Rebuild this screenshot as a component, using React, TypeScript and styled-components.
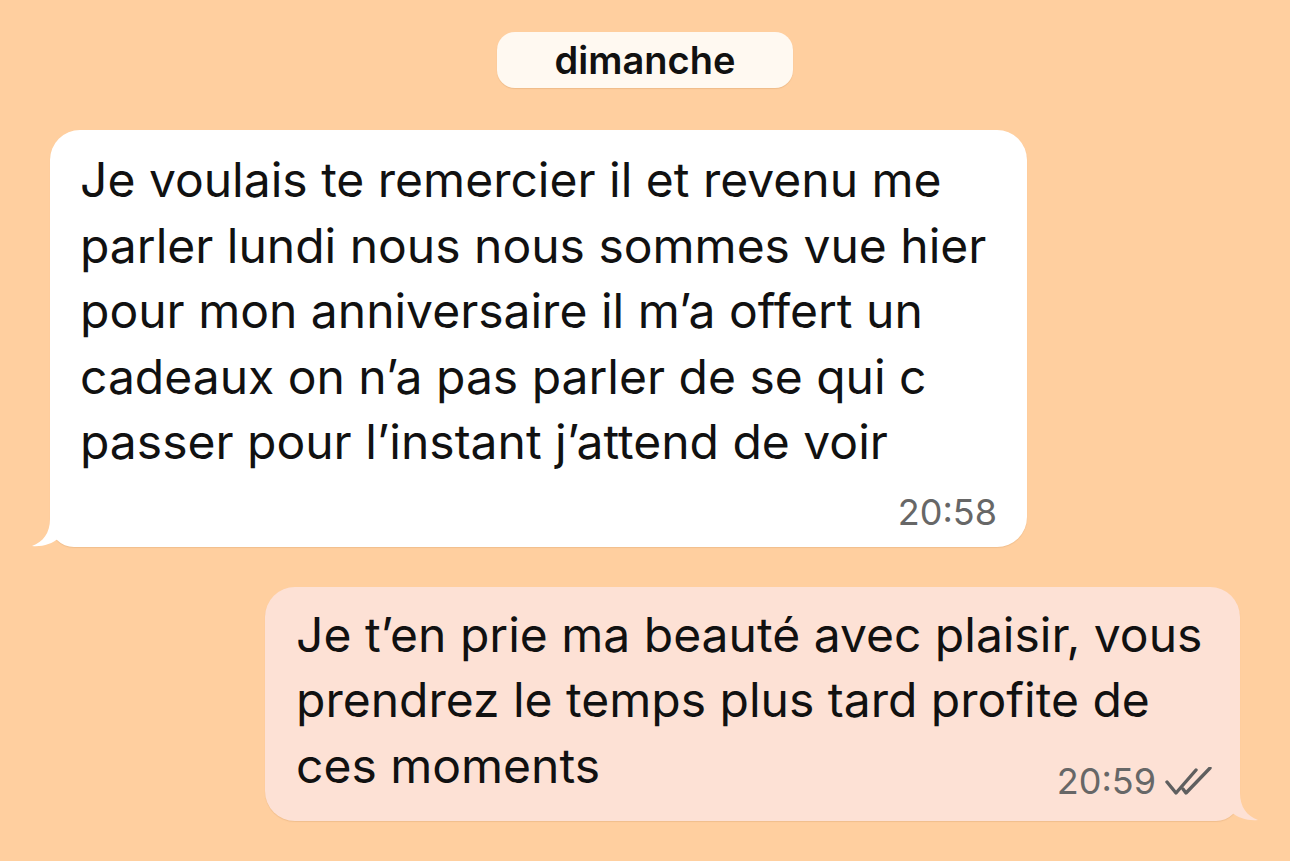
import styled, { createGlobalStyle } from 'styled-components';

const GlobalStyle = createGlobalStyle`
  html, body {
    margin: 0;
    padding: 0;
    background: #ffcf9f;
  }
  body {
    font-family: Inter, "Liberation Sans", sans-serif;
    -webkit-font-smoothing: antialiased;
  }
`;

interface Message {
  id: number;
  outgoing: boolean;
  lines: string[];
  time: string;
  inlineTime?: boolean;
}

const messages: Message[] = [
  {
    id: 1,
    outgoing: false,
    lines: [
      'Je voulais te remercier il et revenu me',
      'parler lundi nous nous sommes vue hier',
      'pour mon anniversaire il m’a offert un',
      'cadeaux on n’a pas parler de se qui c',
      'passer pour l’instant j’attend de voir',
    ],
    time: '20:58',
  },
  {
    id: 2,
    outgoing: true,
    lines: [
      'Je t’en prie ma beauté avec plaisir, vous',
      'prendrez le temps plus tard profite de',
      'ces moments',
    ],
    time: '20:59',
    inlineTime: true,
  },
];

const Tail = ({ color, flip }: { color: string; flip?: boolean }) => (
  <TailSvg $flip={flip} width="50" height="40" viewBox="0 0 50 40">
    <path
      d="M18 0 L18 12 C18 26 11 35 0 39 C10 40 20 37 27 31 C33 37 42 40 50 40 L50 0 Z"
      fill={color}
    />
  </TailSvg>
);

const DoubleCheck = () => (
  <svg width="48" height="28" viewBox="0 0 48 28" fill="none">
    <path
      d="M3 15 L12 26 L32 3"
      stroke="#5f5f5f"
      strokeWidth="3.4"
      strokeLinecap="round"
      strokeLinejoin="round"
    />
    <path
      d="M19 22 L22 26 L46 1"
      stroke="#5f5f5f"
      strokeWidth="3.4"
      strokeLinecap="round"
      strokeLinejoin="round"
    />
  </svg>
);

const App = () => {
  return (
    <>
      <GlobalStyle />
      <Chat>
        <DatePill>dimanche</DatePill>
        {messages.map((msg) => {
          const bg = msg.outgoing ? '#fde1d5' : '#ffffff';
          return (
            <Row key={msg.id} $outgoing={msg.outgoing}>
              <Bubble $outgoing={msg.outgoing} $bg={bg}>
                <Text>
                  {msg.lines.map((line) => (
                    <Line key={line}>{line}</Line>
                  ))}
                </Text>
                <Footer $inline={msg.inlineTime}>
                  <Time>{msg.time}</Time>
                  {msg.outgoing && <DoubleCheck />}
                </Footer>
                <Tail color={bg} flip={msg.outgoing} />
              </Bubble>
            </Row>
          );
        })}
      </Chat>
    </>
  );
};

export default App;

const Chat = styled.div`
  display: flex;
  flex-direction: column;
  align-items: center;
  padding: 32px 50px 0;
  height: 861px;
  box-sizing: border-box;
  overflow: hidden;
`;

const DatePill = styled.div`
  width: 296px;
  height: 56px;
  border-radius: 18px;
  background: #fff9f1;
  box-shadow: 0 1px 1px rgba(160, 100, 40, 0.18);
  display: flex;
  align-items: center;
  justify-content: center;
  font-size: 38px;
  font-weight: 600;
  color: #111;
  margin-bottom: 42px;
`;

const Row = styled.div<{ $outgoing: boolean }>`
  width: 100%;
  display: flex;
  justify-content: ${(p) => (p.$outgoing ? 'flex-end' : 'flex-start')};
  margin-bottom: 40px;
`;

const Bubble = styled.div<{ $outgoing: boolean; $bg: string }>`
  position: relative;
  width: ${(p) => (p.$outgoing ? '975px' : '977px')};
  box-sizing: border-box;
  background: ${(p) => p.$bg};
  border-radius: 30px;
  border-bottom-left-radius: ${(p) => (p.$outgoing ? '30px' : '24px')};
  border-bottom-right-radius: ${(p) => (p.$outgoing ? '24px' : '30px')};
  padding: ${(p) => (p.$outgoing ? '15px 30px 20px 31px' : '17px 30px 15px 30px')};
  box-shadow: 0 1px 1px rgba(160, 100, 40, 0.15);
`;

const Text = styled.div`
  font-size: 48px;
  line-height: 65.5px;
  color: #111;
`;

const Line = styled.div`
  white-space: nowrap;
`;

const Footer = styled.div<{ $inline?: boolean }>`
  display: flex;
  justify-content: flex-end;
  align-items: center;
  gap: 8px;
  height: 40px;
  margin-top: ${(p) => (p.$inline ? '-37px' : '17px')};
  margin-right: ${(p) => (p.$inline ? '-2px' : '0')};
`;

const Time = styled.span`
  font-size: 36px;
  color: #676767;
  line-height: 40px;
`;

const TailSvg = styled.svg<{ $flip?: boolean }>`
  position: absolute;
  bottom: 0;
  ${(p) => (p.$flip ? 'right: -18px;' : 'left: -18px;')}
  transform: ${(p) => (p.$flip ? 'scaleX(-1)' : 'none')};
  display: block;
`;
